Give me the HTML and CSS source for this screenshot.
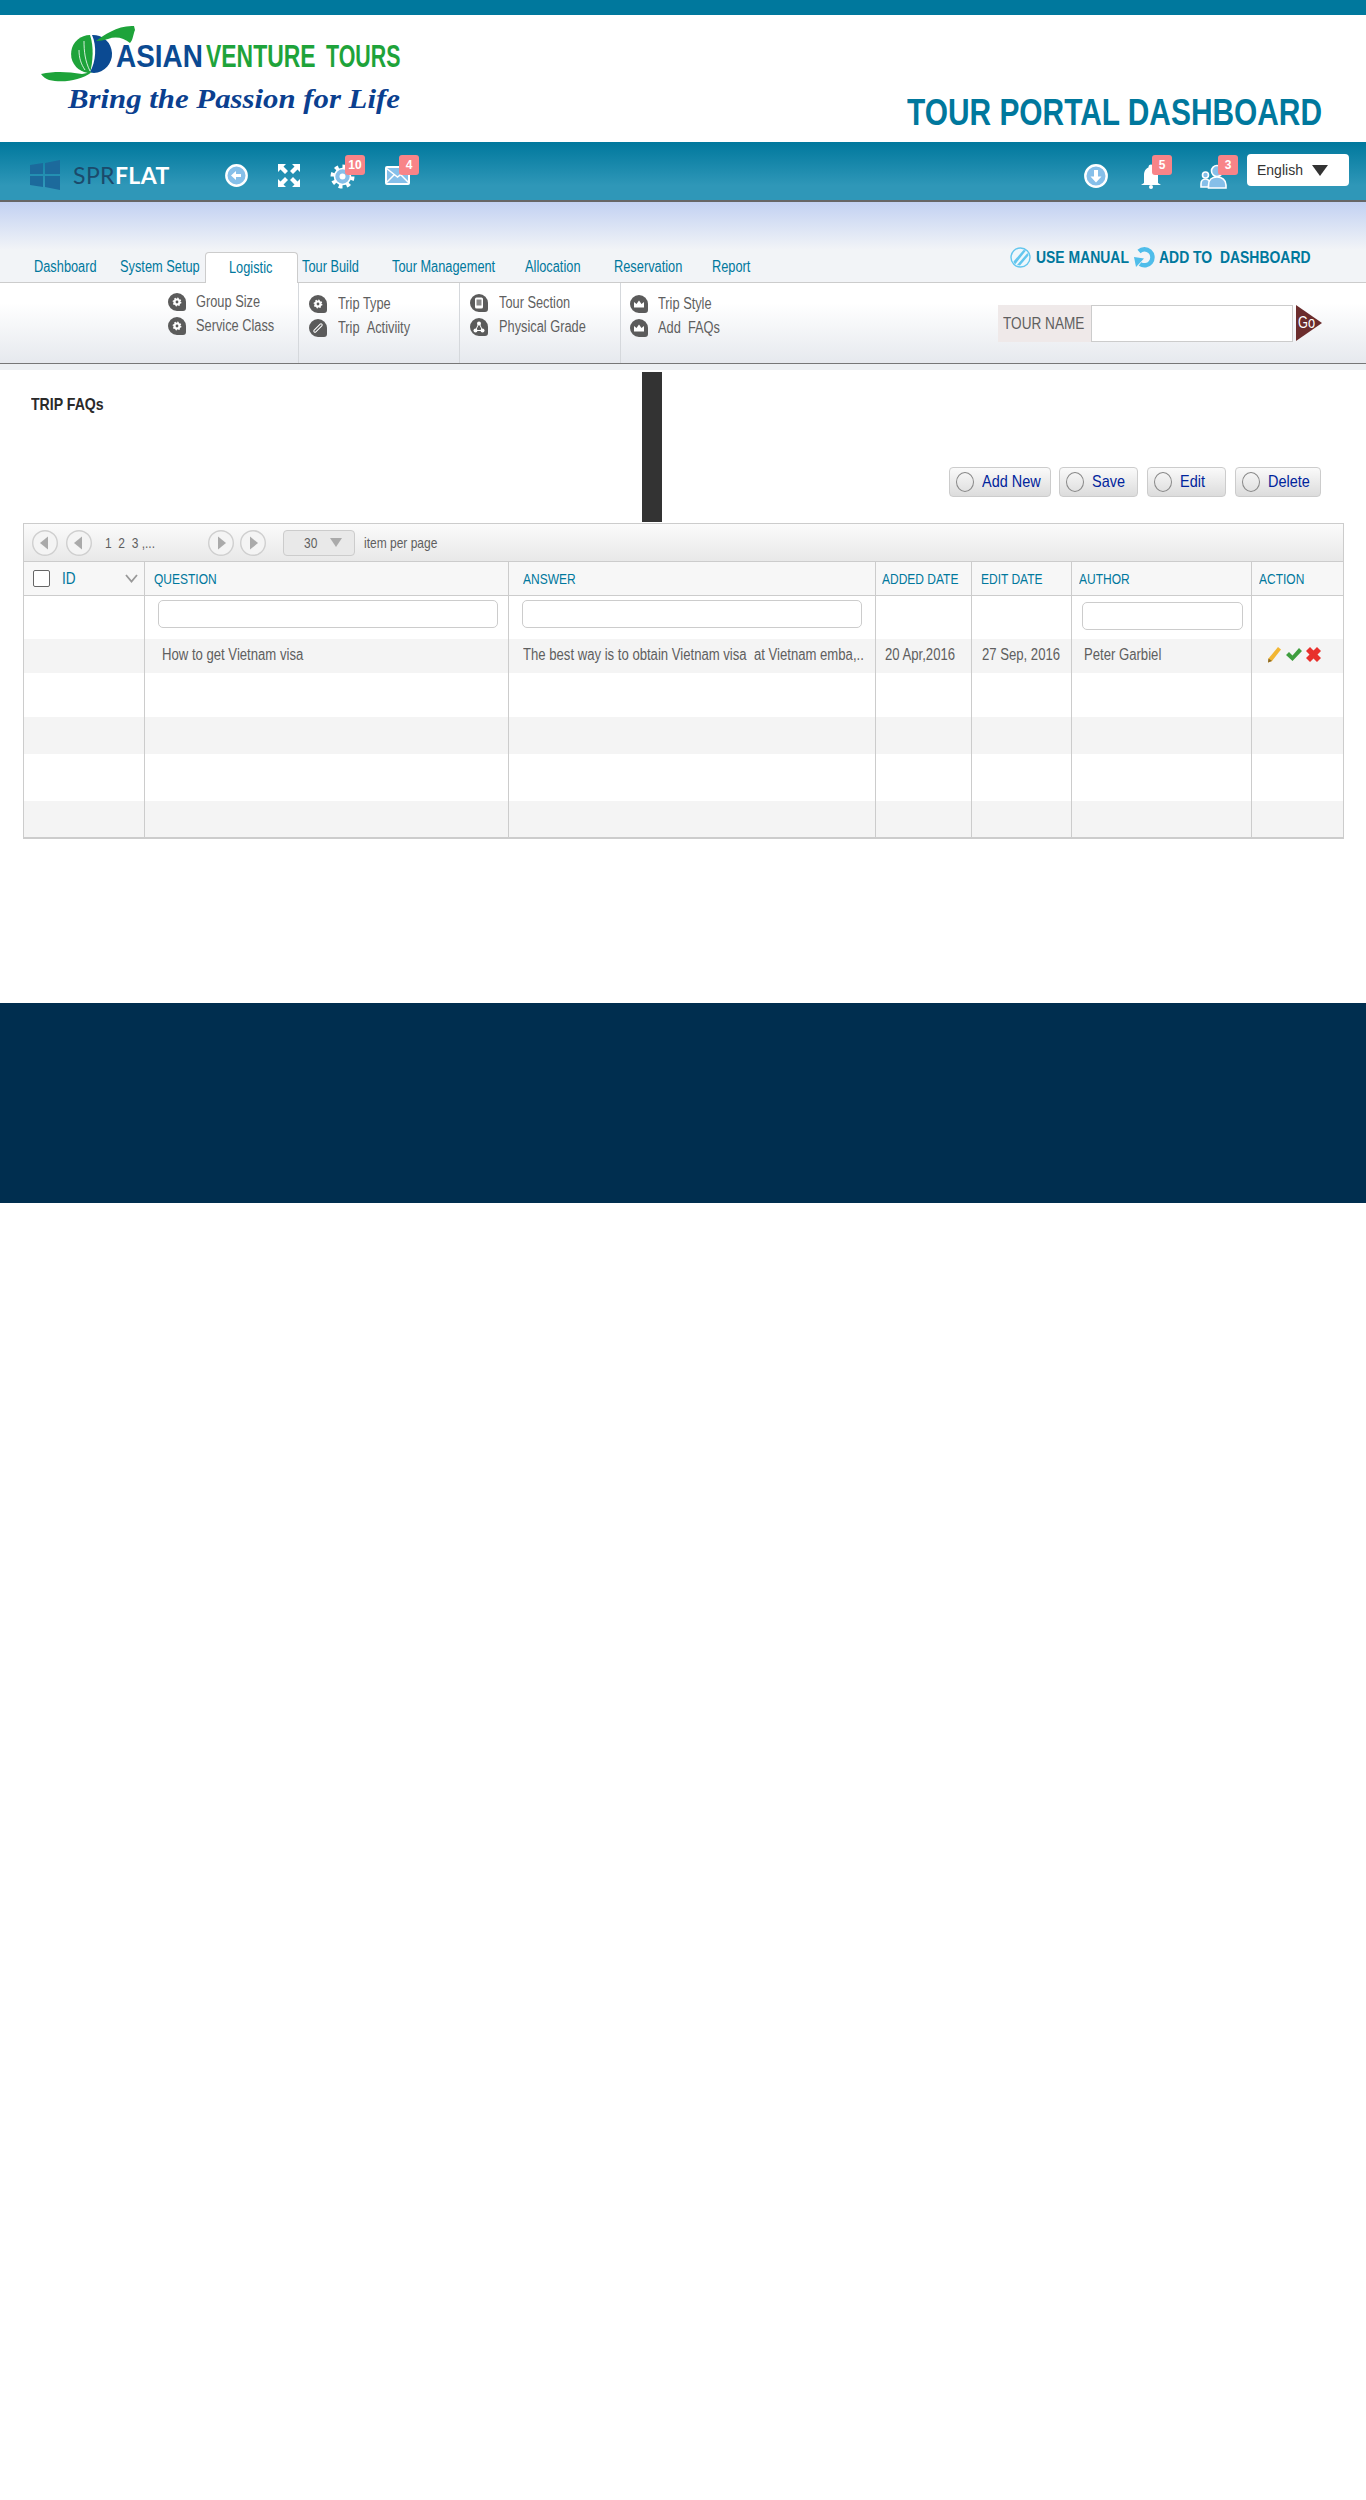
FILE: index.html
```html
<!DOCTYPE html>
<html>
<head>
<meta charset="UTF-8">
<title>Tour Portal Dashboard</title>
<meta name="viewport" content="width=device-width, initial-scale=1.0">
<link rel="stylesheet" href="styles.css">
</head>
<body>

<svg class="defs" width="0" height="0">
  <symbol id="i-gear" viewBox="0 0 18 18"><circle cx="9" cy="9" r="3.6" fill="#fff" stroke="#fff" stroke-width="1.6" stroke-dasharray="1.4 1.4"/><circle cx="9" cy="9" r="1.4" fill="#5b5b5b"/></symbol>
  <symbol id="i-link" viewBox="0 0 18 18"><path d="M6 12l6-6" stroke="#fff" stroke-width="3.4" stroke-linecap="round"/><path d="M6 12l6-6" stroke="#5b5b5b" stroke-width="1.4" stroke-linecap="round"/></symbol>
  <symbol id="i-phone" viewBox="0 0 18 18"><rect x="5" y="3.5" width="8" height="11" rx="1.5" fill="#fff"/><rect x="6.5" y="5.5" width="5" height="6" fill="#8a8a8a"/></symbol>
  <symbol id="i-share" viewBox="0 0 18 18"><path d="M9 5L5.500 12.500H12.500z" fill="none" stroke="#fff"/><circle cx="9" cy="5.500" r="2" fill="#fff"/><circle cx="5.500" cy="12.500" r="2" fill="#fff"/><circle cx="12.500" cy="12.500" r="2" fill="#fff"/></symbol>
  <symbol id="i-crown" viewBox="0 0 18 18"><path d="M4 12.500V7l2.500 2L9 5.500 11.500 9 14 7v5.500z" fill="#fff"/></symbol>
  <symbol id="i-left" viewBox="0 0 26 26"><circle cx="13" cy="13" r="12.300" fill="#f4f4f4" stroke="#cfcfcf" stroke-width="1.400"/><path d="M8 13l8-6.500v13z" fill="#aaa"/></symbol>
  <symbol id="i-right" viewBox="0 0 26 26"><circle cx="13" cy="13" r="12.300" fill="#f4f4f4" stroke="#cfcfcf" stroke-width="1.400"/><path d="M18 13l-8-6.500v13z" fill="#aaa"/></symbol>
</svg>

<div class="top-strip"></div>

<header class="masthead">
  <svg class="logo" viewBox="40 22 365 96" width="365" height="96">
    <path d="M92 35a19 19 0 0 1 2 38c-3 0-4-1-4-1 6-10 7-26 2-37z" fill="#0b4a92"/>
    <path d="M90 35a19 19 0 0 0-6 37c3 1 5 1 6 1 3-12 4-26 0-38z" fill="#1ea33a"/>
    <path d="M84 41c0 10 1 20 6 30M79 50c0 8 2 14 6 20" stroke="#fff" stroke-width="0.800" fill="none"/>
    <path d="M41 74c15-3 27-2 41 0l10-2c-12 9-30 11-43 8-3-1-6-3-8-6z" fill="#1ea33a"/>
    <path d="M96 41c8-6 22-16 38-15l1 4c-2 5-2 10-5 13-6-5-14-7-22-4-4 1-8 2-12 2z" fill="#1ea33a"/>
    <text transform="translate(116 67) scale(0.9 1)" class="logo-word logo-blue">ASIAN</text>
    <text transform="translate(206 67) scale(0.74 1)" class="logo-word logo-green">VENTURE</text>
    <text transform="translate(326 67) scale(0.69 1)" class="logo-word logo-green">TOURS</text>
    <text transform="translate(68 108) scale(1.1 1)" class="logo-tag">Bring the Passion for Life</text>
  </svg>
  <h1 class="portal-title">TOUR PORTAL DASHBOARD</h1>
</header>

<nav class="navbar">
  <svg class="win-logo" width="30" height="30" viewBox="0 0 30 30"><path d="M0 5l13-2v11H0zM15 3l15-3v14H15zM0 16h13v11L0 25zM15 16h15v14l-15-3z" fill="#1c6a9c"/></svg>
  <div class="brand"><span class="brand-dark">SPR</span>FLAT</div>

  <div class="nav-icon back">
    <svg width="23" height="23" viewBox="0 0 23 23"><circle cx="11.500" cy="11.500" r="10.200" fill="#86bfe9" stroke="#fff" stroke-width="2.400"/><path d="M6 11.500l5-4.500v3h5v3h-5v3z" fill="#fff"/></svg>
  </div>
  <div class="nav-icon expand">
    <svg width="22" height="23" viewBox="0 0 22 23" fill="#fff"><path d="M0 0h8L5.500 2.500 10 7l-3 3-4.500-4.500L0 8zM22 0v8l-2.500-2.500L15 10l-3-3 4.500-4.500L14 0zM0 23v-8l2.500 2.500L7 13l3 3-4.500 4.500L8 23zM22 23h-8l2.500-2.500L12 16l3-3 4.500 4.500L22 15z"/></svg>
  </div>
  <div class="nav-icon gear">
    <svg width="25" height="25" viewBox="0 0 25 25"><circle cx="12.500" cy="12.500" r="10" fill="none" stroke="#fff" stroke-width="4" stroke-dasharray="3.800 4"/><circle cx="12.500" cy="12.500" r="8" fill="#86bfe9" stroke="#fff" stroke-width="1.600"/><circle cx="12.500" cy="12.500" r="3" fill="#fff"/></svg>
    <span class="badge">10</span>
  </div>
  <div class="nav-icon mail">
    <svg width="25" height="22" viewBox="0 0 25 22"><rect x="1" y="3" width="23" height="17" rx="1" fill="#86bfe9" stroke="#fff" stroke-width="2"/><path d="M1 4l11.500 9L24 4M1 19l8-8M24 19l-8-8" fill="none" stroke="#fff" stroke-width="1.500"/></svg>
    <span class="badge">4</span>
  </div>

  <div class="nav-icon download">
    <svg width="24" height="24" viewBox="0 0 24 24"><circle cx="12" cy="12" r="10.700" fill="#86bfe9" stroke="#fff" stroke-width="2.400"/><path d="M12 18.500l-5.500-6h3.500V6h4v6.500h3.500z" fill="#fff"/></svg>
  </div>
  <div class="nav-icon bell">
    <svg width="22" height="25" viewBox="0 0 22 25" fill="#fff"><circle cx="11" cy="3" r="2.500"/><path d="M4 19V11c0-5 3-8 7-8s7 3 7 8v8l3 2H1z"/><circle cx="11" cy="23" r="2"/></svg>
    <span class="badge">5</span>
  </div>
  <div class="nav-icon users">
    <svg width="28" height="25" viewBox="0 0 28 25" fill="#86bfe9" stroke="#fff" stroke-width="1.600"><circle cx="5.500" cy="11" r="3"/><path d="M1 23v-3c0-3 2-5 4.500-5 1.500 0 3 1 4 2l-1 6z"/><circle cx="17" cy="7" r="5.500"/><path d="M8.500 24v-3c0-5 3.500-8 8.500-8s9 3 9 8v3z"/></svg>
    <span class="badge">3</span>
  </div>
  <div class="lang">English<span class="lang-arrow"></span></div>
</nav>

<section class="tab-band">
  <div class="tabs">
    <span class="tab"><span class="nw">Dashboard</span></span>
    <span class="tab"><span class="nw">System Setup</span></span>
    <span class="tab tab-active"><span class="nw">Logistic</span></span>
    <span class="tab"><span class="nw">Tour Build</span></span>
    <span class="tab"><span class="nw">Tour Management</span></span>
    <span class="tab"><span class="nw">Allocation</span></span>
    <span class="tab"><span class="nw">Reservation</span></span>
    <span class="tab"><span class="nw">Report</span></span>
  </div>
  <div class="quick-links">
    <svg width="21" height="21" viewBox="0 0 21 21"><circle cx="10.500" cy="10.500" r="9.500" fill="#eef7fc" stroke="#63c6ee" stroke-width="1.400"/><path d="M16 3.500L5 17.500l-1.500-3 10-11.500zM17.500 6L7 18l3 .5 8.500-10z" fill="#63c6ee"/></svg>
    <a class="quick-link use-manual"><span class="nw">USE MANUAL</span></a>
    <svg width="21" height="23" viewBox="0 0 21 23"><path d="M5 5.500A8 8 0 1 1 6 18" fill="none" stroke="#4fbdea" stroke-width="4.500"/><path d="M0 11l10 1.500L2 21z" fill="#4fbdea"/></svg>
    <a class="quick-link add-dash"><span class="nw">ADD TO &nbsp;DASHBOARD</span></a>
  </div>
</section>

<section class="sub-band">
  <div class="sub-group g1">
    <div class="sub-item"><span class="sub-icon"><svg width="18" height="18"><use href="#i-gear"/></svg></span><span class="nw">Group Size</span></div>
    <div class="sub-item"><span class="sub-icon"><svg width="18" height="18"><use href="#i-gear"/></svg></span><span class="nw">Service Class</span></div>
  </div>
  <div class="sub-group g2">
    <div class="sub-item"><span class="sub-icon"><svg width="18" height="18"><use href="#i-gear"/></svg></span><span class="nw">Trip Type</span></div>
    <div class="sub-item"><span class="sub-icon"><svg width="18" height="18"><use href="#i-link"/></svg></span><span class="nw">Trip &nbsp;Activiity</span></div>
  </div>
  <div class="sub-group g3">
    <div class="sub-item"><span class="sub-icon"><svg width="18" height="18"><use href="#i-phone"/></svg></span><span class="nw">Tour Section</span></div>
    <div class="sub-item"><span class="sub-icon"><svg width="18" height="18"><use href="#i-share"/></svg></span><span class="nw">Physical Grade</span></div>
  </div>
  <div class="sub-group g4">
    <div class="sub-item"><span class="sub-icon"><svg width="18" height="18"><use href="#i-crown"/></svg></span><span class="nw">Trip Style</span></div>
    <div class="sub-item"><span class="sub-icon"><svg width="18" height="18"><use href="#i-crown"/></svg></span><span class="nw">Add &nbsp;FAQs</span></div>
  </div>
  <div class="tour-search">
    <label class="tour-label"><span class="nw">TOUR NAME</span></label>
    <input class="tour-input" type="text">
    <span class="go"><span class="nw">Go</span></span>
  </div>
</section>
<div class="sub-shadow"></div>

<main class="content">
  <h2 class="page-title"><span class="nw">TRIP FAQs</span></h2>
  <div class="dark-bar"></div>
  <div class="actions">
    <button class="action-btn btn-add"><span class="btn-dot"></span><span class="nw">Add New</span></button>
    <button class="action-btn btn-save"><span class="btn-dot"></span><span class="nw">Save</span></button>
    <button class="action-btn btn-edit"><span class="btn-dot"></span><span class="nw">Edit</span></button>
    <button class="action-btn btn-delete"><span class="btn-dot"></span><span class="nw">Delete</span></button>
  </div>
</main>

<div class="grid-wrap">
  <div class="pager">
    <svg class="pg-btn" width="26" height="26"><use href="#i-left"/></svg>
    <svg class="pg-btn" width="26" height="26"><use href="#i-left"/></svg>
    <span class="pages"><span class="nw">1&nbsp; 2&nbsp; 3 ,...</span></span>
    <svg class="pg-btn" width="26" height="26"><use href="#i-right"/></svg>
    <svg class="pg-btn" width="26" height="26"><use href="#i-right"/></svg>
    <span class="per-page"><span class="nw">30</span><span class="per-arrow"></span></span>
    <span class="per-label"><span class="nw">item per page</span></span>
  </div>
  <table class="grid">
    <colgroup>
      <col class="c-id"><col class="c-q"><col class="c-a"><col class="c-added"><col class="c-edit"><col class="c-author"><col class="c-action">
    </colgroup>
    <thead>
      <tr>
        <th class="th-id">
          <span class="check"></span><span class="id-label">ID</span>
          <svg class="chev" width="13" height="9" viewBox="0 0 13 9"><path d="M1 1l5.500 6.500L12 1" fill="none" stroke="#999" stroke-width="1.800"/></svg>
        </th>
        <th><span class="nw">QUESTION</span></th>
        <th><span class="nw">ANSWER</span></th>
        <th><span class="nw">ADDED DATE</span></th>
        <th><span class="nw">EDIT DATE</span></th>
        <th><span class="nw">AUTHOR</span></th>
        <th><span class="nw">ACTION</span></th>
      </tr>
    </thead>
    <tbody>
      <tr class="filter-row">
        <td></td>
        <td><input class="filter" type="text"></td>
        <td><input class="filter" type="text"></td>
        <td></td>
        <td></td>
        <td><input class="filter filter-author" type="text"></td>
        <td></td>
      </tr>
      <tr class="alt r-data">
        <td></td>
        <td><span class="nw">How to get Vietnam visa</span></td>
        <td><span class="nw">The best way is to obtain Vietnam visa &nbsp;at Vietnam emba,..</span></td>
        <td><span class="nw">20 Apr,2016</span></td>
        <td><span class="nw">27 Sep, 2016</span></td>
        <td><span class="nw">Peter Garbiel</span></td>
        <td class="row-actions"><svg width="15" height="17" viewBox="0 0 15 17"><path d="M11 1l3 2.500L5 15l-4 1.500.5-4z" fill="#f2b632"/><path d="M1.500 12.500L5 15l-4 1.500z" fill="#8a6a2a"/></svg><svg width="18" height="15" viewBox="0 0 18 15"><path d="M1 8l3-3 3.500 3.500L14 1l3 3-9.500 10z" fill="#3f9e3f"/></svg><svg width="15" height="15" viewBox="0 0 15 15"><path d="M4 0l3.500 3.500L11 0l4 4-3.500 3.500L15 11l-4 4-3.500-3.500L4 15l-4-4 3.500-3.500L0 4z" fill="#e8302c"/></svg></td>
      </tr>
      <tr class="r-2"><td></td><td></td><td></td><td></td><td></td><td></td><td></td></tr>
      <tr class="alt r-3"><td></td><td></td><td></td><td></td><td></td><td></td><td></td></tr>
      <tr class="r-4"><td></td><td></td><td></td><td></td><td></td><td></td><td></td></tr>
      <tr class="alt r-5"><td></td><td></td><td></td><td></td><td></td><td></td><td></td></tr>
    </tbody>
  </table>
</div>

<footer class="site-footer"></footer>

</body>
</html>
```

FILE: styles.css
```css
body {
  margin: 0;
  padding: 0;
  background-color: white;
  font-family: "Liberation Sans", Arial, Helvetica, sans-serif;
  color: #5f5f5f;
}
.defs {
  position: absolute;
}
/* The original face is a condensed Helvetica, so squeeze Liberation Sans to fit */
.nw {
  display: inline-block;
  white-space: nowrap;
  transform: scaleX(0.8);
  transform-origin: left center;
}

/* Header */
.top-strip {
  height: 15px;
  background-color: #00789d;
}
.masthead {
  display: flex;
  justify-content: space-between;
  height: 127px;
}
.logo {
  margin: 7px 0 0 40px;
}
.logo-word {
  font-size: 31px;
  font-weight: 700;
}
.logo-blue {
  fill: #0b4a92;
}
.logo-green {
  fill: #1ea33a;
}
.logo-tag {
  fill: #0b3f8f;
  font-family: "Liberation Serif", serif;
  font-size: 28px;
  font-style: italic;
  font-weight: 700;
}
.portal-title {
  margin: 80px 44px 0 0;
  color: #00789d;
  font-size: 36px;
  line-height: 36px;
  font-weight: 700;
  white-space: nowrap;
  transform: scaleX(0.83);
  transform-origin: right center;
}

/* Blue nav bar */
.navbar {
  display: flex;
  align-items: flex-start;
  box-sizing: border-box;
  height: 60px;
  padding: 22px 0 0 30px;
  background: linear-gradient(to bottom, #00789d, #2f97b8 75%);
  border-bottom: 2px solid #666;
}
.win-logo {
  margin-top: -4px;
}
.brand {
  width: 152px;
  margin: -6px 0 0 13px;
  color: white;
  font-family: Lato, "Liberation Sans", sans-serif;
  font-size: 23px;
  line-height: 34px;
  font-weight: 700;
  letter-spacing: 0.4px;
}
.brand-dark {
  color: #1b4a6b;
  font-weight: 400;
}
.nav-icon {
  position: relative;
  line-height: 0;
}
.expand, .gear, .mail {
  margin-left: 30px;
}
.download {
  margin-left: auto;
}
.bell {
  margin-left: 32px;
}
.users {
  margin-left: 38px;
}
.badge {
  position: absolute;
  top: -9px;
  left: 15px;
  width: 20px;
  height: 20px;
  border-radius: 3px;
  background-color: #f88488;
  color: white;
  font-size: 12px;
  line-height: 20px;
  font-weight: 700;
  text-align: center;
}
.bell .badge {
  left: 12px;
}
.users .badge {
  left: 18px;
}
.mail .badge {
  left: 14px;
}
.lang {
  display: flex;
  align-items: center;
  justify-content: space-between;
  box-sizing: border-box;
  width: 102px;
  height: 32px;
  margin: -10px 17px 0 19px;
  padding: 0 21px 0 10px;
  border-radius: 4px;
  background-color: white;
  color: #333;
  font-size: 14px;
}
.lang-arrow {
  width: 0;
  height: 0;
  border-left: 8px solid transparent;
  border-right: 8px solid transparent;
  border-top: 11px solid #333;
}

/* Tabs */
.tab-band {
  display: flex;
  justify-content: space-between;
  height: 80px;
  background: linear-gradient(to bottom, #c2d1f2, #f2f4f7 60%);
  border-bottom: 1px solid #ccc;
}
.tabs {
  display: grid;
  grid-template-columns: 86px 85px 97px 90px 133px 89px 98px 60px;
  align-self: flex-end;
  height: 31px;
  margin-left: 34px;
  margin-bottom: -1px;
  color: #00789d;
  font-size: 16px;
  line-height: 30px;
}
.tab-active {
  box-sizing: border-box;
  width: 93px;
  height: 31px;
  padding-left: 23px;
  border: 1px solid #ccc;
  border-bottom: none;
  border-radius: 4px 4px 0 0;
  background-color: white;
}
.quick-links {
  display: grid;
  grid-template-columns: 26px 98px 25px 153px;
  align-items: center;
  margin: 44px 54px 0 0;
  height: 22px;
  color: #00789d;
  font-size: 17px;
  font-weight: 700;
}
.quick-link .nw {
  transform: scaleX(0.82);
}

/* Sub menu */
.sub-band {
  display: flex;
  box-sizing: border-box;
  height: 81px;
  padding-left: 168px;
  background: linear-gradient(to bottom, white 25%, #e6e9ee);
  border-bottom: 1px solid #777;
  font-size: 16px;
}
.sub-group {
  box-sizing: border-box;
  width: 161px;
  border-right: 1px solid #d5d8dc;
}
.g1 {
  width: 131px;
  padding-top: 10px;
}
.g2 {
  padding: 12px 0 0 10px;
}
.g3 {
  padding: 11px 0 0 10px;
}
.g4 {
  width: 100px;
  padding: 12px 0 0 9px;
  border-right: none;
}
.sub-item {
  display: flex;
  align-items: center;
  height: 18px;
  margin-bottom: 6px;
  white-space: nowrap;
}
.sub-icon {
  flex: none;
  width: 18px;
  height: 18px;
  margin-right: 10px;
  border-radius: 50% 50% 3px 50%;
  background-color: #5b5b5b;
  line-height: 0;
}
.g2 .sub-icon, .g3 .sub-icon {
  margin-right: 11px;
}
.tour-search {
  display: flex;
  align-items: flex-start;
  margin: 22px 44px 0 auto;
}
.tour-label {
  box-sizing: border-box;
  width: 93px;
  height: 37px;
  padding-left: 5px;
  background-color: #efe9e9;
  color: #5f5f5f;
  font-size: 17px;
  line-height: 37px;
}
.tour-input {
  box-sizing: border-box;
  width: 202px;
  height: 37px;
  margin: 0;
  border: 1px solid #ccc;
  background-color: white;
}
.go {
  width: 26px;
  height: 36px;
  margin-left: 3px;
  padding-left: 2px;
  box-sizing: border-box;
  background-color: #6b2c2c;
  clip-path: polygon(0 0, 100% 50%, 0 100%);
  color: white;
  font-size: 16px;
  line-height: 36px;
}
.sub-shadow {
  height: 6px;
  background-color: #edf0f3;
}

/* Page title row */
.content {
  display: grid;
  grid-template-columns: 642px 20px 1fr;
  height: 153px;
}
.page-title {
  margin: 26px 0 0 31px;
  color: #2a2a2a;
  font-size: 17px;
  line-height: 18px;
  font-weight: 700;
}
.page-title .nw {
  transform: scaleX(0.83);
}
.dark-bar {
  height: 150px;
  margin-top: 2px;
  background-color: #333;
}
.actions {
  display: flex;
  align-items: flex-end;
  justify-content: flex-end;
  gap: 8px;
  padding: 0 45px 26px 0;
}
.action-btn {
  display: flex;
  align-items: center;
  height: 30px;
  padding: 0 0 0 6px;
  border: 1px solid #ccc;
  border-radius: 4px;
  background: linear-gradient(to bottom, #fafafa, #dcdcdc);
  color: #00249c;
  font-family: inherit;
  font-size: 17px;
  white-space: nowrap;
}
.action-btn .nw {
  transform: scaleX(0.85);
}
.btn-add {
  width: 102px;
}
.btn-save {
  width: 79px;
}
.btn-edit {
  width: 79px;
  margin-left: 1px;
}
.btn-delete {
  width: 86px;
  margin-left: 1px;
}
.btn-dot {
  flex: none;
  box-sizing: border-box;
  width: 18px;
  height: 20px;
  margin-right: 8px;
  border: 1px solid #888;
  border-radius: 50%;
}

/* Grid */
.grid-wrap {
  margin: 0 22px 0 23px;
  border: 1px solid #ccc;
  border-bottom-width: 2px;
}
.pager {
  display: flex;
  align-items: center;
  box-sizing: border-box;
  height: 38px;
  padding-left: 8px;
  background: linear-gradient(to bottom, #fbfbfb, #e8e8e8);
  border-bottom: 1px solid #ccc;
  font-size: 15px;
}
.pg-btn {
  margin-right: 8px;
}
.pg-btn + .pg-btn {
  margin-right: 0;
}
.pages {
  width: 103px;
  margin-left: 13px;
}
.pages + .pg-btn {
  margin-right: 6px;
}
.per-page {
  display: flex;
  align-items: center;
  justify-content: space-between;
  box-sizing: border-box;
  width: 72px;
  height: 26px;
  margin-left: 17px;
  padding: 0 12px 0 20px;
  border: 1px solid #ccc;
  border-radius: 4px;
  background-color: #e9e9e9;
}
.per-page .nw {
  width: 14px;
}
.per-arrow {
  width: 0;
  height: 0;
  border-left: 6px solid transparent;
  border-right: 6px solid transparent;
  border-top: 9px solid #aaa;
}
.per-label {
  margin-left: 9px;
}
.grid {
  width: 100%;
  table-layout: fixed;
  border-collapse: collapse;
  font-size: 16px;
}
.c-id { width: 120px; }
.c-q { width: 364px; }
.c-a { width: 367px; }
.c-added { width: 96px; }
.c-edit { width: 100px; }
.c-author { width: 180px; }
.c-action { width: 92px; }
.grid th {
  height: 33px;
  padding: 0;
  border-left: 1px solid #ccc;
  border-bottom: 1px solid #ccc;
  background-color: #f7f7f7;
  color: #00789d;
  font-size: 15px;
  font-weight: 400;
  text-align: left;
}
.grid td {
  padding: 0;
  border-left: 1px solid #ccc;
  white-space: nowrap;
}
.grid td .nw {
  transform: scaleX(0.82);
}
.grid th:first-child, .grid td:first-child {
  border-left: none;
}
.th-id {
  position: relative;
}
.check {
  display: inline-block;
  box-sizing: border-box;
  width: 17px;
  height: 17px;
  margin: 0 12px 0 9px;
  border: 1px solid #666;
  border-radius: 2px;
  background-color: white;
  vertical-align: middle;
}
.id-label {
  display: inline-block;
  font-size: 17px;
  vertical-align: middle;
  transform: scaleX(0.8);
  transform-origin: left center;
}
.chev {
  position: absolute;
  top: 12px;
  left: 101px;
}
.grid th:nth-child(2) { padding-left: 9px; }
.grid th:nth-child(3) { padding-left: 14px; }
.grid th:nth-child(4) { padding-left: 6px; }
.grid th:nth-child(5) { padding-left: 9px; }
.grid th:nth-child(6) { padding-left: 7px; }
.grid th:nth-child(7) { padding-left: 7px; }
.filter-row td {
  height: 43px;
  padding-top: 4px;
  box-sizing: border-box;
  vertical-align: top;
}
.filter {
  display: block;
  box-sizing: border-box;
  width: 340px;
  height: 28px;
  margin-left: 13px;
  border: 1px solid #ccc;
  border-radius: 5px;
  background-color: white;
}
.filter-author {
  width: 161px;
  margin: 2px 0 0 10px;
}
.alt td {
  background-color: #f4f4f4;
}
.r-data td {
  height: 34px;
  padding-bottom: 2px;
  box-sizing: border-box;
}
.r-data td:nth-child(2) { padding-left: 17px; }
.r-data td:nth-child(3) { padding-left: 14px; }
.r-data td:nth-child(4) { padding-left: 9px; }
.r-data td:nth-child(5) { padding-left: 10px; }
.r-data td:nth-child(6) { padding-left: 12px; }
.row-actions {
  line-height: 0;
}
.r-data .row-actions {
  padding-left: 15px;
}
.row-actions svg {
  margin-right: 3px;
  vertical-align: middle;
}
.r-2 td { height: 44px; }
.r-3 td { height: 37px; }
.r-4 td { height: 47px; }
.r-5 td { height: 36px; }

.site-footer {
  height: 200px;
  margin-top: 164px;
  background-color: #002e4f;
}
```
